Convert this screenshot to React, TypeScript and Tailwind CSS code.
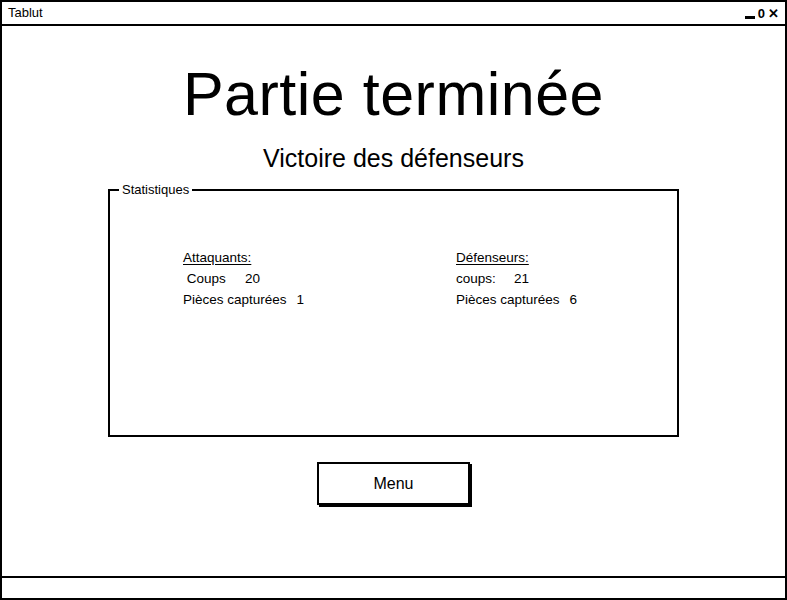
const font = { fontFamily: '"Liberation Sans", Arial, sans-serif' };

function StatBlock({ title, rows }: { title: string; rows: [string, string, string][] }) {
  return (
    <div className="flex flex-col gap-[5px] text-[13.5px] leading-[16px] text-black">
      <div className="underline underline-offset-2">{title}</div>
      {rows.map(([label, value, pad]) => (
        <div key={label} className="flex">
          <span className={pad}>{label}</span>
          <span>{value}</span>
        </div>
      ))}
    </div>
  );
}

export default function App() {
  return (
    <div className="w-[787px] h-[600px] bg-white" style={font}>
      <div className="w-full h-full border-2 border-black flex flex-col">
        {/* title bar */}
        <div className="h-[24px] border-b-2 border-black flex items-center justify-between px-[6px]">
          <span className="text-[13px] text-black">Tablut</span>
          <div className="flex items-end gap-[3px] text-black font-bold text-[13px] leading-none">
            <span className="w-[10px] h-[3px] bg-black mb-[1px]" />
            <span>0</span>
            <span>✕</span>
          </div>
        </div>

        {/* content */}
        <div className="flex-1 flex flex-col items-center">
          <h1 className="mt-[34px] text-[61px] leading-[68px] text-black tracking-[0.5px]">Partie terminée</h1>
          <h2 className="mt-[16px] text-[25px] leading-[28px] text-black">Victoire des défenseurs</h2>

          <fieldset className="mt-[11px] w-[571px] h-[254px] border-2 border-black pl-[73px] pt-[53px]">
            <legend className="ml-[-64px] px-[3px] text-[13px] leading-[14px] text-black">Statistiques</legend>
            <div className="flex">
              <div className="w-[273px]">
                <StatBlock
                  title="Attaquants:"
                  rows={[
                    ['\u00a0Coups', '20', 'w-[62px]'],
                    ['Pièces capturées', '1', 'pr-[10px]'],
                  ]}
                />
              </div>
              <StatBlock
                title="Défenseurs:"
                rows={[
                  ['coups:', '21', 'w-[58px]'],
                  ['Pièces capturées', '6', 'pr-[10px]'],
                ]}
              />
            </div>
          </fieldset>

          <button className="mt-[25px] w-[153px] h-[43px] border-2 border-black bg-white text-[16px] text-black shadow-[2px_2px_0_0_#000]">
            Menu
          </button>
        </div>

        {/* status bar */}
        <div className="h-[22px] border-t-2 border-black" />
      </div>
    </div>
  );
}
